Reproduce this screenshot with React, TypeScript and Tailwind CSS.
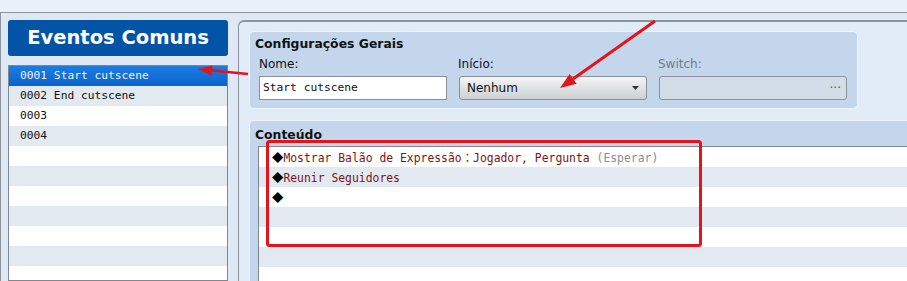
const leftRows = ["0001 Start cutscene", "0002 End cutscene", "0003", "0004", "", "", "", "", "", "", ""];

function ListRow({ index, selected, children }: { index: number; selected?: boolean; children?: React.ReactNode }) {
  const bg = selected
    ? "bg-gradient-to-b from-[#1d7ce0] to-[#0b63cc] text-[#eef4ff]"
    : index % 2 === 1
      ? "bg-[#e3e9f0] text-[#111]"
      : "bg-white text-[#111]";
  return <div className={`h-[20px] shrink-0 whitespace-pre leading-[20px] ${bg}`}>{children}</div>;
}

function Diamond() {
  return (
    <span className="inline-block w-[11.4px] font-['Noto_Sans_CJK_JP',sans-serif] text-[11.4px] text-black">◆</span>
  );
}

function Annotations() {
  return (
    <svg className="pointer-events-none absolute left-0 top-0" width="907" height="281" viewBox="0 0 907 281">
      <line x1="248" y1="74" x2="210" y2="70.3" stroke="#e5131b" strokeWidth="2.5" />
      <polygon points="198,69 212.4,65.4 211.4,75.4" fill="#e5131b" />
      <line x1="655" y1="21" x2="573" y2="79" stroke="#e5131b" strokeWidth="3" />
      <polygon points="560,88 576.6,83.7 569.6,73.9" fill="#e5131b" />
      <rect x="267.5" y="141.5" width="433" height="104" rx="2" fill="none" stroke="#e5131b" strokeWidth="3" />
    </svg>
  );
}

export default function App() {
  const mono = "font-['DejaVu_Sans_Mono','Noto_Sans_CJK_JP',monospace] text-[11.25px]";
  return (
    <div className="relative h-[281px] w-[907px] overflow-hidden bg-[#e4eefa] font-['DejaVu_Sans',sans-serif]">
      <div className="h-[12px] bg-[#e9f1fb]" />
      <div className="flex h-[269px] border-l border-t border-[#8d949c] bg-[#dfe9f6]">
        {/* left: common events */}
        <div className="flex w-[237px] shrink-0 flex-col pl-[7px] pt-[7px]">
          <div className="flex h-[36px] w-[220px] shrink-0 items-center justify-center rounded-[3px] bg-[#0353a7] text-[19.5px] font-bold text-white">
            Eventos Comuns
          </div>
          <div className={`mt-[9px] flex w-[220px] flex-1 flex-col overflow-hidden border border-[#7f868e] bg-white ${mono}`}>
            {leftRows.map((r, i) => (
              <ListRow key={i} index={i} selected={i === 0}>
                <span className="pl-[11px]">{r}</span>
              </ListRow>
            ))}
          </div>
        </div>

        {/* right: event editor */}
        <div className="mt-[7px] flex min-h-0 flex-1 flex-col rounded-tl-[6px] border-l border-t-2 border-[#8d949c] bg-[#e2ecf8] pl-[10px] pt-[9px]">
          <div className="h-[78px] w-[609px] shrink-0 rounded-[5px] border border-[#eef4fc] bg-[#c4d6eb] pl-[9px]">
            <div className="-ml-[4px] pt-[5px] text-[12.4px] font-bold leading-[14px] text-[#111]">Configurações Gerais</div>
            <div className="mt-[6px] grid grid-cols-[188px_188px_188px] gap-x-[12px] text-[12px] leading-[14px]">
              <div className="text-[#111]">Nome:</div>
              <div className="-ml-[1px] text-[#111]">Início:</div>
              <div className="-ml-[1px] text-[#6e7c8b]">Switch:</div>
              <div className={`mt-[5px] flex h-[24px] items-center border border-[#8a9096] bg-white pl-[3px] text-[#111] ${mono}`}>
                Start cutscene
              </div>
              <div className="mt-[5px] flex h-[24px] items-center justify-between rounded-[3px] border border-[#8a9096] bg-gradient-to-b from-[#f3f4f5] to-[#cdd1d5] pl-[7px] pr-[7px] text-[12px] text-[#111]">
                <span>Nenhum</span>
                <svg width="7" height="4" viewBox="0 0 7 4">
                  <polygon points="0,0 7,0 3.5,4" fill="#333" />
                </svg>
              </div>
              <div className="mt-[5px] flex h-[24px] items-center justify-end rounded-[3px] border border-[#8a939c] bg-[#d3dde8] pr-[5px] text-[12px] text-[#555]">
                ···
              </div>
            </div>
          </div>

          <div className="mt-[11px] flex min-h-0 flex-1 flex-col overflow-hidden rounded-tl-[5px] border-l border-t border-[#eef4fc] bg-[#c4d6eb] pl-[8px]">
            <div className="-ml-[3px] shrink-0 pt-[7px] text-[12.4px] font-bold leading-[14px] text-[#111]">Conteúdo</div>
            <div className={`mt-[4px] flex min-h-0 flex-1 flex-col overflow-hidden border-l border-t border-[#7f868e] bg-white font-['DejaVu_Sans_Mono','Noto_Sans_CJK_JP',monospace] text-[11.4px]`}>
              <ListRow index={0}>
                <span className="pl-[13px]" />
                <Diamond />
                <span className="text-[#7d1414]">Mostrar Balão de Expressão：Jogador, Pergunta</span>
                <span className="text-[#8c8c8c]"> (Esperar)</span>
              </ListRow>
              <ListRow index={1}>
                <span className="pl-[13px]" />
                <Diamond />
                <span className="text-[#7d1414]">Reunir Seguidores</span>
              </ListRow>
              <ListRow index={2}>
                <span className="pl-[13px]" />
                <Diamond />
              </ListRow>
              <ListRow index={3} />
              <ListRow index={4} />
              <ListRow index={5} />
              <ListRow index={6} />
            </div>
          </div>
        </div>
      </div>
      <Annotations />
    </div>
  );
}
